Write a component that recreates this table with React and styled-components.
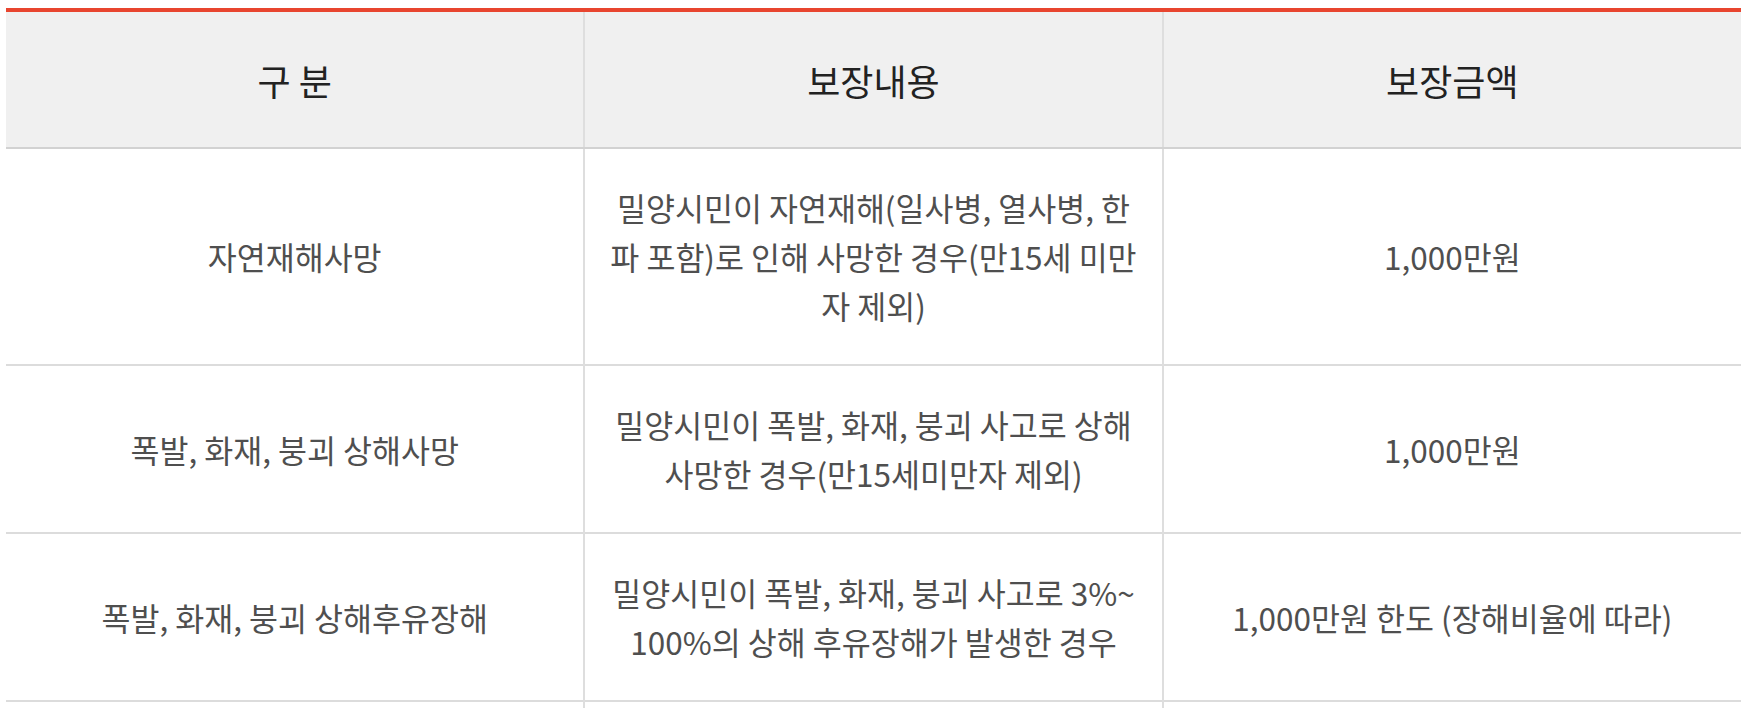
import React from 'react'
import styled, { createGlobalStyle } from 'styled-components'

const GlobalStyle = createGlobalStyle`
  body {
    margin: 8px 6px 0;
    background: #fff;
    font-family: "Noto Sans CJK KR", "Noto Sans", sans-serif;
  }
`

const Table = styled.table`
  width: 100%;
  table-layout: fixed;
  border-collapse: collapse;
  border-top: 4px solid #e8452f;
`

const HeadCell = styled.th`
  height: 135px;
  padding: 0;
  background: #f0f0f0;
  border-bottom: 2px solid #d2d2d2;
  border-left: ${p => (p.first ? 'none' : '2px solid #dedede')};
  color: #222;
  font-size: 36px;
  font-weight: 400;
  text-align: center;
  vertical-align: middle;
`

const Row = styled.tr`
  border-bottom: 2px solid #dcdcdc;
`

const Cell = styled.td`
  height: ${p => (p.empty ? '98px' : 'auto')};
  padding: 34px 8px;
  border-left: ${p => (p.first ? 'none' : '2px solid #dedede')};
  color: #4f4f4f;
  font-size: 31.5px;
  line-height: 49px;
  text-align: center;
  vertical-align: middle;
`

const rows = [
  {
    kind: '자연재해사망',
    detail: ['밀양시민이 자연재해(일사병, 열사병, 한', '파 포함)로 인해 사망한 경우(만15세 미만', '자 제외)'],
    amount: '1,000만원'
  },
  {
    kind: '폭발, 화재, 붕괴 상해사망',
    detail: ['밀양시민이 폭발, 화재, 붕괴 사고로 상해', '사망한 경우(만15세미만자 제외)'],
    amount: '1,000만원'
  },
  {
    kind: '폭발, 화재, 붕괴 상해후유장해',
    detail: ['밀양시민이 폭발, 화재, 붕괴 사고로 3%~', '100%의 상해 후유장해가 발생한 경우'],
    amount: '1,000만원 한도 (장해비율에 따라)'
  }
]

export default function App() {
  return (
    <>
      <GlobalStyle />
      <Table>
        <thead>
          <tr>
            <HeadCell first>구 분</HeadCell>
            <HeadCell>보장내용</HeadCell>
            <HeadCell>보장금액</HeadCell>
          </tr>
        </thead>
        <tbody>
          {rows.map((r, i) => (
            <Row key={i}>
              <Cell first>{r.kind}</Cell>
              <Cell>
                {r.detail.map((line, j) => (
                  <React.Fragment key={j}>
                    {j > 0 && <br />}
                    {line}
                  </React.Fragment>
                ))}
              </Cell>
              <Cell>{r.amount}</Cell>
            </Row>
          ))}
          {/* next row starts just below the fold */}
          <Row>
            <Cell first empty />
            <Cell empty />
            <Cell empty />
          </Row>
        </tbody>
      </Table>
    </>
  )
}
